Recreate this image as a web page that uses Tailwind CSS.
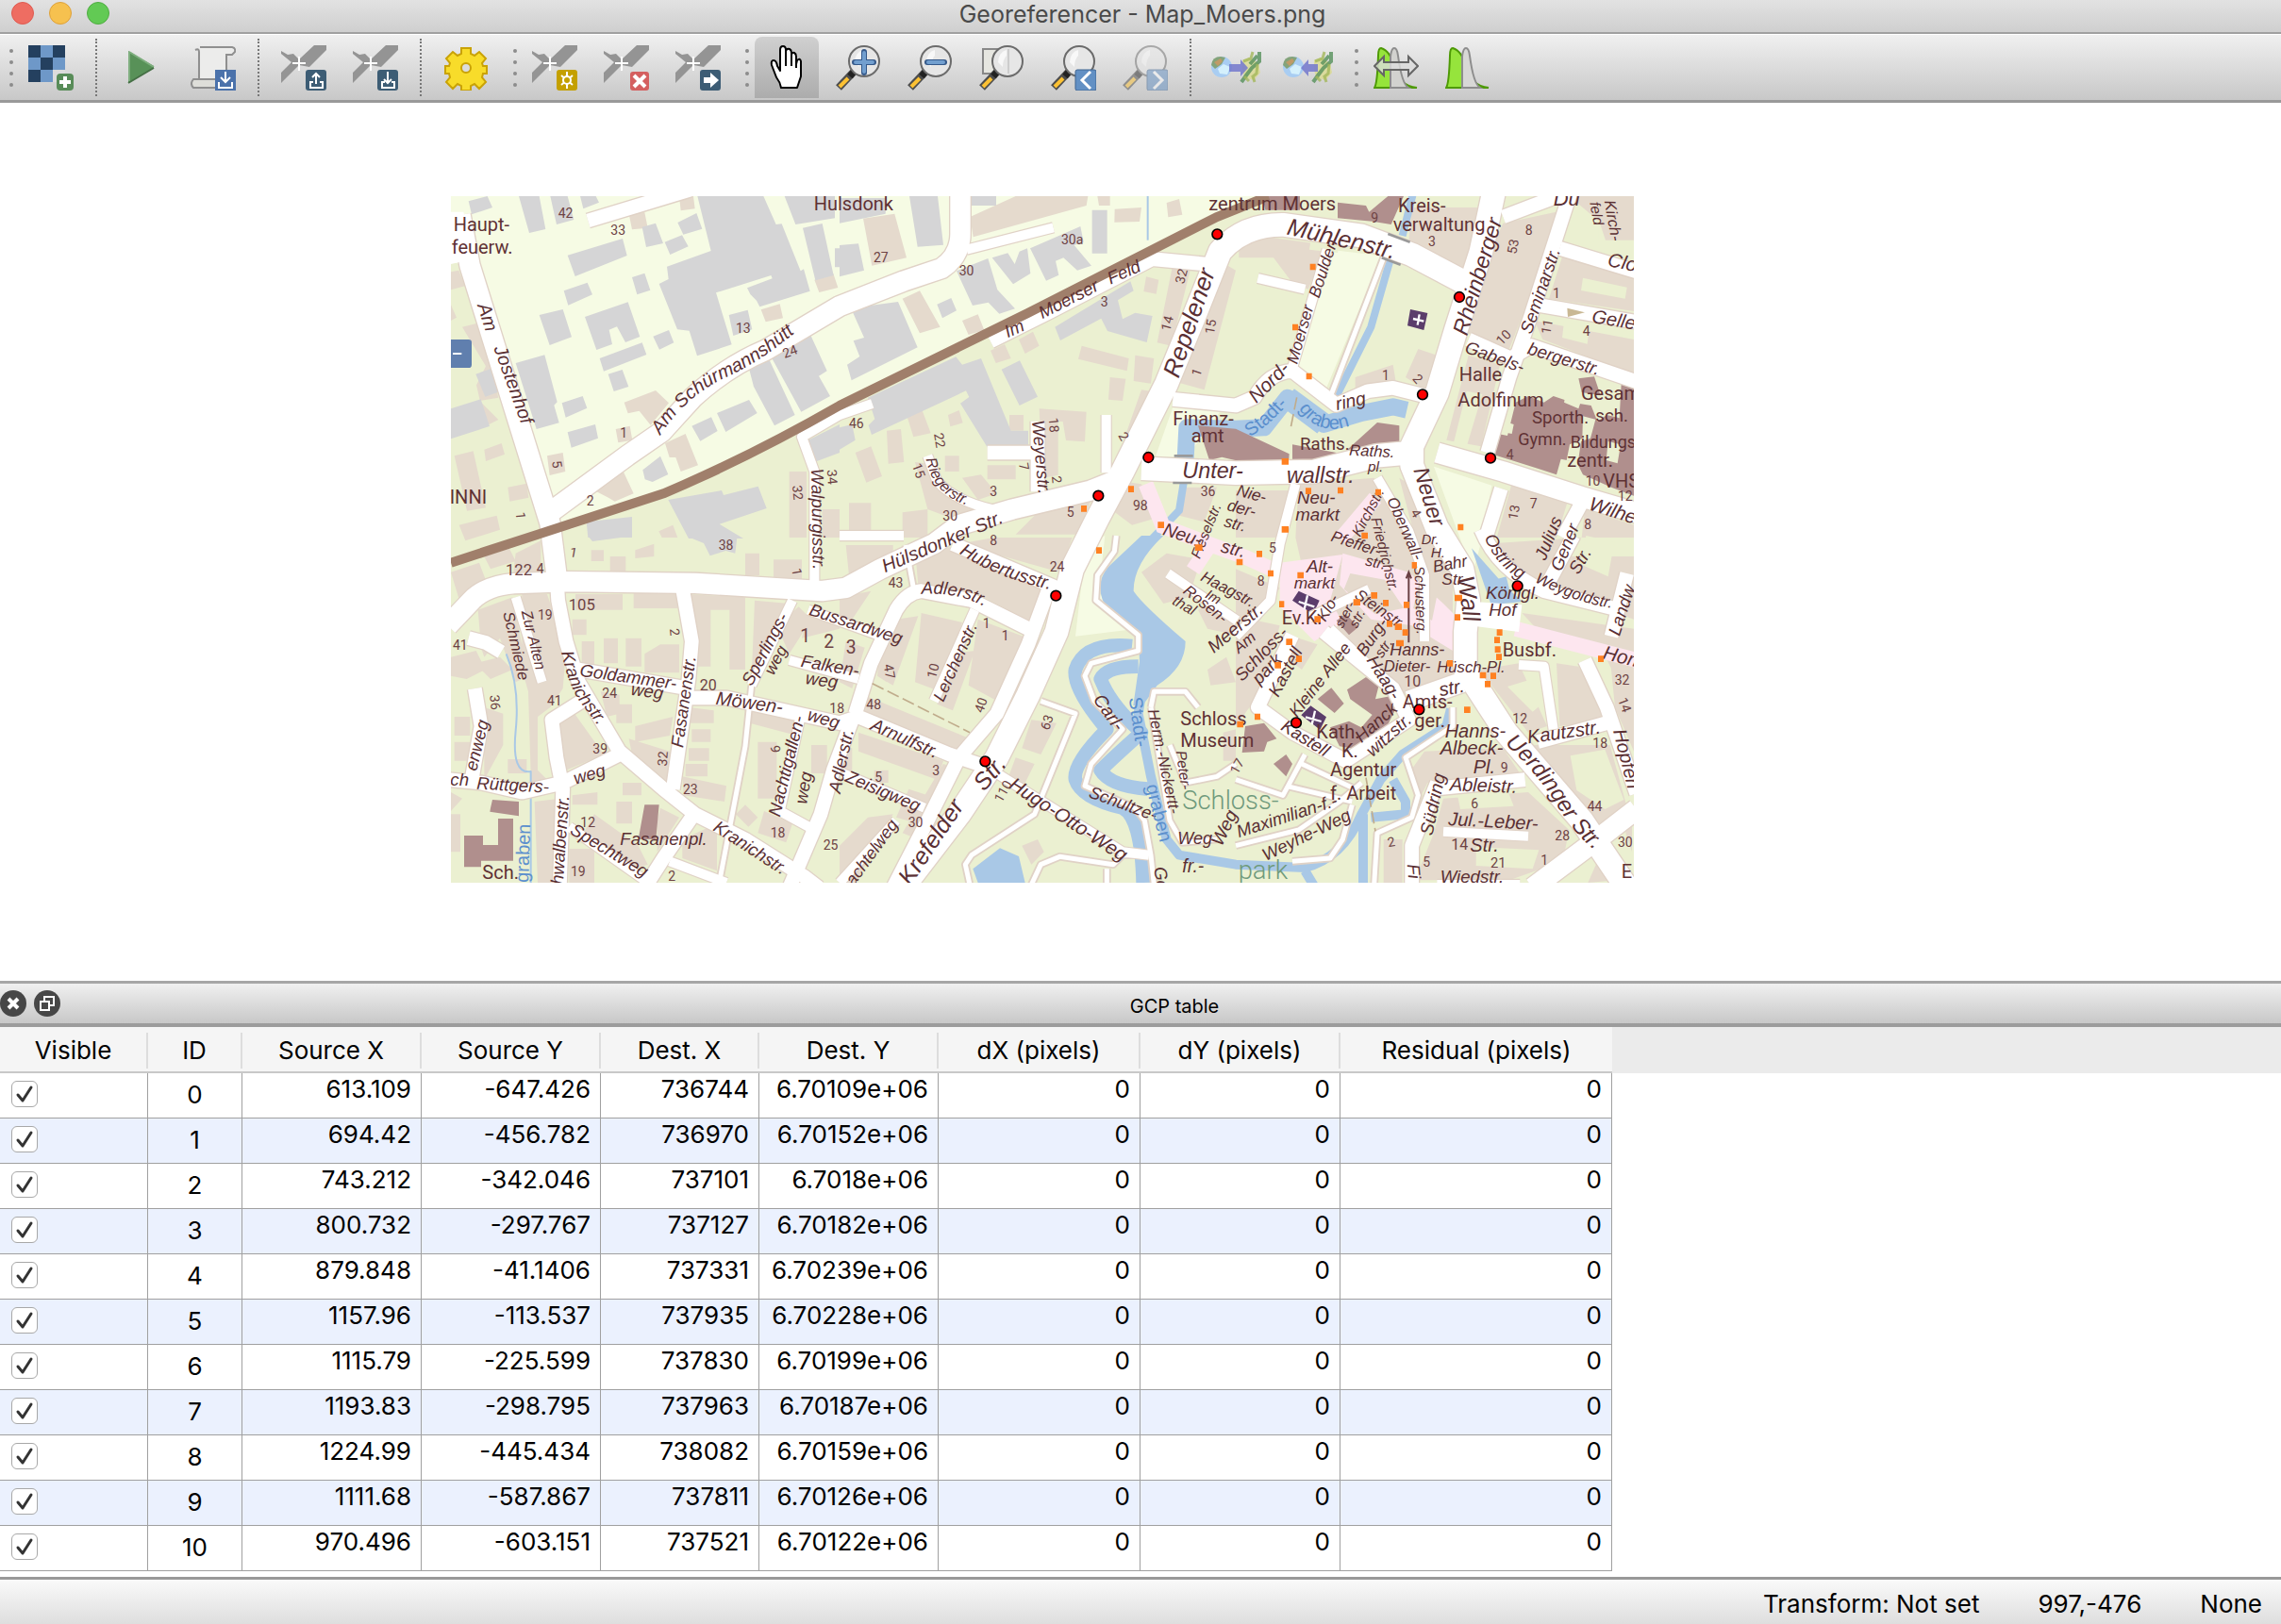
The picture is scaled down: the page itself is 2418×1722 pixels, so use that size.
<!DOCTYPE html>
<html lang="en">
<head>
<meta charset="utf-8">
<title>Georeferencer - Map_Moers.png</title>
<script src="https://cdn.jsdelivr.net/npm/@tailwindcss/browser@4"></script>
</head>
<body class="flex min-h-screen flex-col bg-white font-['Inter','Roboto',sans-serif] text-[26px] text-black">

<svg class="hidden" aria-hidden="true">
  <symbol id="gcp" viewBox="0 0 48 48">
    <path d="M35 0h13v5L30 23 19 21 0 40V29l11-11L0 9V6l7 4 6-1 6 6z" fill="#949494"/>
    <path d="M19 12v15M12 19h14" stroke="#fff" stroke-width="2"/>
  </symbol>
  <symbol id="lens" viewBox="0 0 48 48">
    <path d="M19 28 3 45" stroke="#4d4d4d" stroke-width="8"/>
    <path d="M13 35 4 44" stroke="#fcc133" stroke-width="4"/>
    <path d="M20 27l-5 6" stroke="#222" stroke-width="7"/>
    <circle cx="30" cy="17" r="16" fill="#e6e6e6" stroke="#6b6b6b" stroke-width="2"/>
    <path d="M20 18a11 13 0 0 1 9-13v6q-4 4-4 12z" fill="#fff" opacity=".7"/>
  </symbol>
  <symbol id="worlds" viewBox="0 0 54 36">
    <circle cx="12" cy="17" r="11" fill="#a9cdf2"/>
    <path d="M1 15q1-9 10-9l5 1-4 7-7 5z" fill="#84a37a"/>
    <path d="M4 12l7-4 2 3-5 5z" fill="#c09a67"/>
    <path d="M8 19l6-5 7 3-3 8-8-1z" fill="#d4f0fc"/>
    <path d="M34 10l7-3 10 6 2 10-7 8-10-3-2-8z" fill="#dcdc78" opacity=".6"/>
    <path d="M52 1v10l-8 7-6 8-5 7M50 5l-8 9" fill="none" stroke="#55905a" stroke-width="4" opacity=".8"/>
    <path d="M45 1l-2 7-8 3M50 14l-1 10-5 4M36 27l5 5M45 27l2 6" fill="none" stroke="#a3b65a" stroke-width="3" opacity=".8"/>
  </symbol>
</svg>

<header class="flex h-[36px] items-center border-b-2 border-[#a0a0a0] bg-linear-to-b from-[#e2e2e2] to-[#cfcfcf] pl-3">
  <div class="flex w-[112px] gap-4 pb-1.5">
    <button aria-label="Close window" class="size-6 rounded-full border border-[#df5a50] bg-[#ee6d62]"></button>
    <button aria-label="Minimise window" class="size-6 rounded-full border border-[#dea13a] bg-[#f6c14f]"></button>
    <button aria-label="Zoom window" class="size-6 rounded-full border border-[#4fac41] bg-[#62ca54]"></button>
  </div>
  <h1 class="flex-1 pb-1 pr-[120px] text-center text-[25px] leading-7 text-[#4a4a4a]">Georeferencer - Map_Moers.png</h1>
</header>

<nav aria-label="Georeferencer tools" class="flex h-[73px] items-stretch border-t border-b-3 border-t-white border-b-[#999] bg-linear-to-b from-[#f0f0f0] to-[#c8c8c8] pb-0.5 pt-0.5">
  <div class="flex w-5 flex-col items-end justify-center gap-2 pr-1.5"><i class="size-1 rounded-full bg-[#8c8c8c]"></i><i class="size-1 rounded-full bg-[#8c8c8c]"></i><i class="size-1 rounded-full bg-[#8c8c8c]"></i><i class="size-1 rounded-full bg-[#8c8c8c]"></i></div>
  <button aria-label="Open raster" class="grid w-[68px] place-items-center"><svg class="size-12" viewBox="0 0 48 48"><path d="M0 0h39v39H0z" fill="#24405f"/><path d="M13 0h13v13H13zM0 13h13v13H0zM26 13h13v13H26zM13 26h13v13H13z" fill="#6e98c8"/><path d="M26 26h13v13H26z" fill="#dcdcdc"/><rect x="30" y="30" width="18" height="18" rx="4" fill="#588c58"/><path d="M39 33v12M33 39h12" stroke="#fff" stroke-width="4"/></svg></button>
  <div class="flex w-7 justify-center py-0.5"><i class="border-l-2 border-dotted border-[#777]"></i></div>
  <button aria-label="Start georeferencing" class="grid w-[68px] place-items-center"><svg class="size-12" viewBox="0 0 48 48"><path d="M10 6l27 16v2L10 40z" fill="#589158"/><path d="M11 7v31M11 7l26 16" stroke="#7eae7e" stroke-width="2"/><path d="M10 40l27-16" stroke="#456f45" stroke-width="2"/></svg></button>
  <button aria-label="Generate GDAL script" class="ml-2 grid w-[68px] place-items-center"><svg class="size-12" viewBox="0 0 48 48"><path d="M10 2h34q4 1 3 5l-3 3h-6v30H9V7Q9 3 5 5" fill="#ececeb" stroke="#8f8f8f" stroke-width="2"/><path d="M8 36h24v9H3q-4-4 0-9z" fill="#deded9" stroke="#8f8f8f" stroke-width="2"/><rect x="26" y="26" width="22" height="22" fill="#4b72ab"/><path d="M37 28v10M32 34l5 5 5-5M30 39v6h14v-6" fill="none" stroke="#fff" stroke-width="2"/></svg></button>
  <div class="flex w-7 justify-center py-0.5"><i class="border-l-2 border-dotted border-[#777]"></i></div>
  <button aria-label="Load GCP points" class="grid w-[68px] place-items-center"><svg class="size-12" viewBox="0 0 48 48"><use href="#gcp"/><rect x="26" y="26" width="22" height="22" rx="3" fill="#3d5d75"/><path d="M37 41V30M33 34l4-4 4 4M34 39h-3v6h13v-6h-3" fill="none" stroke="#fff" stroke-width="2"/></svg></button>
  <button aria-label="Save GCP points as" class="ml-2 grid w-[68px] place-items-center"><svg class="size-12" viewBox="0 0 48 48"><use href="#gcp"/><rect x="26" y="26" width="22" height="22" rx="3" fill="#3d5d75"/><path d="M37 28v11M33 36l4 4 4-4M34 39h-3v6h13v-6h-3" fill="none" stroke="#fff" stroke-width="2"/></svg></button>
  <div class="flex w-7 justify-center py-0.5"><i class="border-l-2 border-dotted border-[#777]"></i></div>
  <button aria-label="Transformation settings" class="grid w-[68px] place-items-center"><svg class="size-12" viewBox="0 0 48 48"><path d="M19 3h10v6l4 2 5-4 7 7-4 5 1 3h4v8h-4l-1 4 4 5-7 7-5-5-4 2v5H19v-5l-4-2-5 5-7-7 4-5-1-4H2v-8h4l1-3-4-5 7-7 5 4 4-2z" fill="#f8dc2a" stroke="#c9a206" stroke-width="2"/><circle cx="24" cy="24" r="5" fill="#dcdcdc" stroke="#c9a206" stroke-width="2"/></svg></button>
  <div class="flex w-[26px] flex-col items-end justify-center gap-2 pr-1.5"><i class="size-1 rounded-full bg-[#8c8c8c]"></i><i class="size-1 rounded-full bg-[#8c8c8c]"></i><i class="size-1 rounded-full bg-[#8c8c8c]"></i><i class="size-1 rounded-full bg-[#8c8c8c]"></i></div>
  <button aria-label="Add point" class="grid w-[68px] place-items-center"><svg class="size-12" viewBox="0 0 48 48"><use href="#gcp"/><rect x="26" y="26" width="22" height="22" rx="3" fill="#c4a000"/><path d="M37 28v18M31 32l12 10M43 32L31 42" stroke="#fff" stroke-width="2"/><circle cx="37" cy="37" r="4" fill="#c4a000" stroke="#fff" stroke-width="2"/></svg></button>
  <button aria-label="Delete point" class="ml-2 grid w-[68px] place-items-center"><svg class="size-12" viewBox="0 0 48 48"><use href="#gcp"/><rect x="28" y="28" width="20" height="20" rx="3" fill="#d45f5f"/><path d="M32 32l12 12M44 32L32 44" stroke="#fff" stroke-width="4"/></svg></button>
  <button aria-label="Move GCP point" class="ml-2 grid w-[68px] place-items-center"><svg class="size-12" viewBox="0 0 48 48"><use href="#gcp"/><rect x="26" y="26" width="22" height="22" rx="3" fill="#3d5d75"/><path d="M30 34h7v-5l9 8-9 8v-5h-7z" fill="#fff"/></svg></button>
  <div class="flex w-[26px] flex-col items-end justify-center gap-2 pr-1.5"><i class="size-1 rounded-full bg-[#8c8c8c]"></i><i class="size-1 rounded-full bg-[#8c8c8c]"></i><i class="size-1 rounded-full bg-[#8c8c8c]"></i><i class="size-1 rounded-full bg-[#8c8c8c]"></i></div>
  <button aria-label="Pan" aria-pressed="true" class="grid w-[68px] place-items-center rounded-t-lg bg-linear-to-b from-[#d0d0d0] to-[#acacac]"><svg class="size-12" viewBox="0 0 48 48"><path d="M18 45q-1-6-5-11L8 21q-1-5 2-5 3 0 4 6l3 5V5q0-4 3-4t3 4v10V6q1-3 4-2 2 1 2 4v9-7q1-3 3-2t2 4v8l1-4q3-3 4 1v16l-4 12z" fill="#fff" stroke="#000" stroke-width="2" stroke-linejoin="round"/><path d="M23 12v10M29 14v8M34 18v6" stroke="#000" stroke-width="2"/></svg></button>
  <button aria-label="Zoom in" class="ml-2 grid w-[68px] place-items-center"><svg class="size-12" viewBox="0 0 48 48"><use href="#lens"/><path d="M30 7v22M20 18h20" stroke="#35598a" stroke-width="6" stroke-linecap="round"/><path d="M30 8v20M21 18h18" stroke="#729fcf" stroke-width="4" stroke-linecap="round"/></svg></button>
  <button aria-label="Zoom out" class="ml-2 grid w-[68px] place-items-center"><svg class="size-12" viewBox="0 0 48 48"><use href="#lens"/><path d="M21 18h18" stroke="#35598a" stroke-width="6" stroke-linecap="round"/><path d="M22 18h16" stroke="#729fcf" stroke-width="4" stroke-linecap="round"/></svg></button>
  <button aria-label="Zoom to layer" class="ml-2 grid w-[68px] place-items-center"><svg class="size-12" viewBox="0 0 48 48"><path d="M4 4h26v26H4z" fill="#e6e6e0" stroke="#888" stroke-width="2"/><use href="#lens"/><path d="M31 4v26" stroke="#ccc" stroke-width="2"/></svg></button>
  <button aria-label="Zoom last" class="ml-2 grid w-[68px] place-items-center"><svg class="size-12" viewBox="0 0 48 48"><use href="#lens"/><rect x="26" y="26" width="22" height="22" rx="2" fill="#6290c4" stroke="#3f6490"/><path d="M42 28l-9 9 9 9" fill="none" stroke="#fff" stroke-width="3"/></svg></button>
  <button aria-label="Zoom next" disabled class="ml-2 grid w-[68px] place-items-center opacity-50"><svg class="size-12" viewBox="0 0 48 48"><use href="#lens"/><rect x="26" y="26" width="22" height="22" rx="2" fill="#6290c4" stroke="#3f6490"/><path d="M33 28l9 9-9 9" fill="none" stroke="#fff" stroke-width="3"/></svg></button>
  <div class="flex w-7 justify-center py-0.5"><i class="border-l-2 border-dotted border-[#777]"></i></div>
  <button aria-label="Link Georeferencer to QGIS" class="grid w-[68px] place-items-center"><svg class="h-9 w-[54px]" viewBox="0 0 54 36"><use href="#worlds"/><path d="M20 14h12V9l8 9-8 9v-5H20z" fill="#7378cc" opacity=".85"/></svg></button>
  <button aria-label="Link QGIS to Georeferencer" class="ml-2 grid w-[68px] place-items-center"><svg class="h-9 w-[54px]" viewBox="0 0 54 36"><use href="#worlds"/><path d="M38 14H28V9l-8 9 8 9v-5h10z" fill="#7378cc" opacity=".85"/></svg></button>
  <div class="flex w-[26px] flex-col items-end justify-center gap-2 pr-1.5"><i class="size-1 rounded-full bg-[#8c8c8c]"></i><i class="size-1 rounded-full bg-[#8c8c8c]"></i><i class="size-1 rounded-full bg-[#8c8c8c]"></i><i class="size-1 rounded-full bg-[#8c8c8c]"></i></div>
  <button aria-label="Full histogram stretch" class="grid w-[68px] place-items-center"><svg class="size-12" viewBox="0 0 48 48"><path d="M1 45q3-4 4-34 0-8 3-8 10 3 14 20 5 20 24 22z" fill="#96e43c" stroke="#4e9a06" stroke-width="2"/><path d="M18 45V12q1-9 4-9t4 8q4 30 11 34z" fill="#d2d2cf" stroke="#8d8d8d" stroke-width="2"/><path d="M1 22l10-10v6h26v-6l10 10-10 10v-6H11v6z" fill="#dcdcdc" fill-opacity=".8" stroke="#666" stroke-width="2"/></svg></button>
  <button aria-label="Local histogram stretch" class="ml-2 grid w-[68px] place-items-center"><svg class="size-12" viewBox="0 0 48 48"><path d="M1 45q3-4 4-34 0-8 3-8 10 3 14 20 5 20 24 22z" fill="#96e43c" stroke="#4e9a06" stroke-width="2"/><path d="M18 45V12q1-9 4-9t4 8q4 30 11 34z" fill="#d8d8d6" stroke="#8d8d8d" stroke-width="2"/></svg></button>
</nav>

<main class="flex-1 pb-[104px] pl-[478px] pt-[99px]">
<svg class="block h-[728px] w-[1254px]" viewBox="0 0 3762 2184" role="img" aria-label="Street map of Moers with ground control points">
  <defs>
    <g id="r80"><path d="M3226 276L3056 186 2896 126 2646 91Q2520 90 2446 176L2366 376 2276 596 2136 876 2056 1026 1976 1186 1926 1386 1836 1586 1736 1786 1616 1966 1436 2200"/><path d="M2196 866L2496 881 2746 876 2946 826 3056 816"/><path d="M3316-10L3276 176 3196 426 3136 626 3056 796 3056 856 3136 1056 3216 1186 3236 1286 3226 1386V1506L3356 1706 3596 1986 3740 2200"/></g>
    <g id="r65"><path d="M30 60L60 220 315 1040 336 1206"/><path d="M310 1010L560 826 670 750 770 640Q880 540 1000 490L1236 350 1440 270 1560 230Q1620 190 1620 120V-10"/><path d="M-10 1366L66 1286Q110 1240 200 1232L376 1226 776 1231 1180 1256 1256 1246 1366 1186 1536 1106 1616 1046 1786 996 2036 936 2136 896"/><path d="M3136 816L3346 876 3596 956 3780 1010"/><path d="M3770 1950L3646 2046 3440 2200"/><path d="M3046 1606L3216 1546"/></g>
    <g id="r45"><path d="M336 1206L341 1286 366 1416 406 1546 536 1766 676 1886 776 1966 936 2046 1126 2166 1170 2200"/><path d="M436 78L760-20"/><path d="M1716 462L1900 370 2230 200 2400 216"/><path d="M3560-10L3436 376 3366 576 3296 816"/><path d="M3346 66L3546-10M3526 166L3770 240M3456 346L3770 400M3236 456L3370 516 3436 476 3770 590"/><path d="M2296 646L2496 666 2556 640Q2600 560 2676 556L2816 664 2916 620 2996 610 3116 640"/><path d="M736 1246L766 1416 756 1536 706 1886M406 1506L756 1566"/><path d="M756 1596H876L1236 1676 1296 1656 1586 1776 1736 1826"/><path d="M1286 1646L1336 1486 1416 1316Q1450 1260 1496 1256L1656 1286 1836 1376"/><path d="M1906 1236L1836 1426 1736 1646 1616 1786 1516 1986 1406 2200"/><path d="M1596 1106L1926 1246"/><path d="M1276 1666L1216 1826 1176 1966 1076 2200"/><path d="M-10 1856L96 1866 226 1896 356 1866 536 1776M76 1566L96 1686 66 1856M416 1606L321 1666 336 1786 356 1886 346 2200"/><path d="M56 1406L110 1420 160 1450"/><path d="M766 1976L676 2106 616 2200M1866 716V940M1706 816H1846"/><path d="M2676 1396L2566 1626 2676 1706 2846 1796 3046 1666 2996 1566 2776 1386"/><path d="M3456 1736L3676 1676M3606 1476L3676 1626 3770 1900M3116 1886L3416 1856M3136 1866L3056 2066V2200"/><path d="M3276 1060Q3330 1190 3476 1256L3716 1316M3570 1080L3476 1256M3340 930L3290 1090M3596 976L3536 1086M3740 1200L3690 1400"/></g>
    <g id="r30"><path d="M1640 170L1916 100M2676 546L2786 170M2566 261L2716 296M1666 1316L1536 1606M1086 1286L956 1556M1076 1476L1296 1536M1136 1316L1386 1406M1116 1636L1046 1956 1156 2016"/><path d="M206 1276L290 1546M376 2006L636 2190M696 2116L876 2184M1340 660L1236 696 1116 766 1156 876V1236M1516 826L1546 906Q1600 970 1736 1000M2084 696V880M1236 1080H1440"/><path d="M1246 1836L1506 1946M1236 2184L1416 1986M1736 1836L2136 2086 2220 2096M3396 1491L3476 1496 3506 1696M3156 2021L3426 2036M3136 2190H3400"/><path d="M2686 916L2636 1106 2606 1286 2496 1400M2946 896L3046 1066 3096 1206V1416M2730 1340L2920 1250M2796 1376L2996 1566M2280 1200L2500 1350"/></g>
    <g id="r16"><path d="M956 1556L936 1750 856 2170M1446 1110L1471 1246M2966 196L2796 640"/><path d="M1876 1606L1986 1646 1856 1966 1656 2096 1636 2126 1650 2190M1846 2190L1876 2126 1936 2101 2106 2126 2136 2096 2216 2096M2086 2140V2184"/><path d="M2116 1080L2110 1130 2056 1206 2051 1286 2186 1396V1446L2036 1486 2016 1526 2046 1606 2136 1696 2036 1806 2016 1876 2176 1946 2206 1986 2226 2096 2236 2190"/><path d="M2226 1626L2236 1576H2336L2376 1626M2226 1626L2286 1986 2326 2056 2436 2046M2286 1746L2336 1866 2436 1846 2496 1806"/><path d="M2496 1856L2646 1906 2716 1776M2656 1876L2866 1926M2706 1806L2876 1886M2496 2066L2696 2016 2826 1926 2896 1866M2676 2116L2796 2106 2836 2046 2866 1936M3186 1626V1686L3036 1786 3076 1906 3056 1976 2946 2026 2936 2190"/></g>
    <path id="p-schuermann" d="M690 785Q770 660 900 600T1150 430"/>
    <path id="p-kranich" d="M375 365Q400 480 440 530T520 640"/>
    <path id="p-stadt" d="M45 790Q110 750 170 680"/>
    <path id="p-graben" d="M200 700Q270 800 385 745"/>
    <path id="p-uerdinger" d="M855 655Q960 750 1020 850T1160 1010"/>
    <path id="p-hubertus" d="M380 50Q500 130 690 170"/>
    <path id="p-rieger" d="M275 860Q300 990 440 1015"/>
    <path id="p-adler" d="M260 180Q400 170 500 245"/>
    <path id="p-ost" d="M790 0Q830 90 900 130"/>
    <path id="p-weyg" d="M950 140Q1080 210 1230 230"/>
  </defs>

  <rect width="3762" height="2184" fill="#ebf0d1"/>
  <path d="M0 0H2560L2436 66 1836 371 1236 666 676 946 380 1060 320 1040 60 240 0 200z" fill="#f6fbe4"/>
  <path d="M2796 170L2960 190 2780 620 2690 540zM3126 860L3310 920 3276 1100 3250 1200zM2020 1110L2080 1080 2060 1260 2150 1380 1986 1400zM2300 660L2450 680 2340 830H2240z" fill="#f6fbe4"/>

  <!-- houses -->
  <g fill="#e5dacd">
    <g transform="translate(-24 -24)">
      <path d="M24 265l25-5 20 50-45 12zM60 440l60-15 55 240-60 10 60 60-40 20-30-130 30-60zM24 370l18 40-18 10zM575 680l100-38 42 40-58 70-36-45-36 8zM705 810l65-30 40 100-55 20-16-45h-20zM480 960l90-65 35 75-60 25-20-12zM1180 290l60-20 15 45-60 15zM1010 385l60-18 10 45-55 12zM590 80l50-5 10 50-50 5zM750 24h45l5 40-45 6zM35 850l60-15 40 180-60 10zM130 830l55-20 10 35-60 22zM205 950l60-12 6 45-60 12zM50 1070l120-30 10 45-110 35zM1100 900h55v210h-55zM1205 1020h55v90h-55zM685 1090l45-20 15 40h-50zM330 850l50-10 8 60-50 12zM548 765l45-10 8 45-45 8z"/>
    </g>
    <g transform="translate(1236 -24)">
      <path d="M75 95l100-15 38 140-110 25zM415 90L560 24h230l-5 30-360 100zM875 65l85-5-6 45-80 2zM820 24h40v30h-35zM1040 45l40-12 10 50-45 8zM200 350l55-25 65 115-65 20zM390 420l50-20 20 50-50 15zM480 515l45-20 20 45-48 15zM570 480l45-25 20 45-45 25zM770 500l150 40-6 40-155-38zM860 600l50 5-10 70-45-4zM940 530l60 10-10 80-55-8zM1060 240l55 20-60 240-45-10zM1210 230l50 30-100 380-90-25zM960 640l70 10-90 240-75 20zM635 700l150 10-5 95-60-4-10-60h-15v170l-50 10zM110 700l50-15 15 40-50 18zM150 770l45-5 10 105-50 5zM210 710l50-12 30 80-55 12zM345 720l35-15 12 40-40 12zM50 840l50-20 35 95-50 20zM30 1000h70v90H30zM335 850h45v50h-45zM240 870l40 5 70 110 90 20-40 60-120-45zM390 920l60-10 50 60-60 20zM470 880h90v45h-90zM200 1030l80-10v90h-80zM660 1000l150-40-50 140H560zM890 930l70 10 40 110-70 20-80-60zM1090 950h110l-40 110-80-20zM540 720h45v50h-45zM1040 0h60l-30 22zM975 280l40 10-8 45-40-8z"/>
    </g>
    <g transform="translate(2496 -24)">
      <path d="M10 180l100-25 180 25-60 140-50-20-60-80H10zM560 60h210l-30 210-190-100zM850 110l190-40-170 440-90-20-40-30 60-240zM1060 24h206v140h-90l-20-60zM1040 210l226 50v130l-270-40zM950 420l316 60v110l-290-110zM380 600l120-40 10 60-130 20zM580 510l60 20-40 110-60-40zM740 530l100 30-60 260-110-20zM0 960h170l-10 150H0zM200 940l240-20 130 190H190zM520 920l60 40 40 150h-50zM880 930l180 50-40 130H830zM1110 1020l156 50v40h-166z"/>
    </g>
    <g transform="translate(-24 1086)">
      <path d="M24 110l90-30 30 80-90 50zM130 60l80-25 20 40-80 25zM230 50l80-40v120H220zM110 230l110-40 50 250-40 20-50-140-50 60-10-30zM250 180h80l60 180-10 120-40 60-40 30v170l40 40-60 40-10-330-20-70zM420 180h150v50H420zM605 175h140v50H605zM770 180l190 10v230h-50v-190h-60v180h-50zM440 330h40v90h-40zM510 320h45v80h-45zM580 320h50v90h-50zM640 370l50-30h60v90h-110zM990 200l110 10-80 180-40 60zM1060 280l70-60 40 40-70 110zM350 590l60-40 100 140-120 50zM430 600l50 50-60 60zM500 490l60 10v60l-40 10zM550 530h50v60h-50zM610 600l120-30-10 60-110 20zM590 640l130 40v120l-120-110zM780 540l80 10v40h-80zM790 610h60v40h-60zM780 670h65v40h-65zM770 720h70v40h-70zM760 760l140 30-6 50-130-20zM1000 650h60v180h-60zM980 540l150 40-6 50-150-40zM930 880l30-30 40 40-30 30zM1020 870l90 40-20 60-90-30zM1170 660h50v90h-50zM130 540l60 20v100l-60 110zM35 570h50v60H35zM35 650h50v60H35zM205 705h60v45h-60zM60 830l-36 40v-60zM290 840l80-10v268h-70zM24 880h30v120H24zM410 820l80-10v40h-80zM480 880l140 100 30 60-60 20-150-110zM550 840h50v70h-50zM690 860l60 30-70 110v-100zM570 780h60v40h-60zM400 990h80v108h-80zM760 960l110-50v150l-110-40zM1160 230l100 20v40l-120 30zM24 380l80-20 30 60-60 30-50-10zM100 400l80-20 40 40-70 30zM410 260h45v50h-45zM960 50h45v70h-45zM1050 70h90v80h-90zM530 60h50v60h-50zM470 40h40v35h-40zM610 40l60-20v40l-60 6z"/>
    </g>
    <g transform="translate(1236 1086)">
      <path d="M240 40l120-10 300 130-50 110-170-90-190-30zM380 20l110-20h250l-40 110zM20 24h150v50L30 120zM180 260l70-10-80 220-50-30zM260 240l130 30-70 220-80-30zM440 260l160 60-80 210-110-60zM350 370l80-10-70 190-50-20zM75 500l340 140-30 40-310-110zM130 330l80 20-60 110-30-20zM60 620l270 90-20 60-250-90zM330 720l30 10-110 230-50-20zM110 740h45v40h-45zM220 800l60 20-30 90-70-20zM0 660l40 10v80H0zM610 580l80 10-50 100-60-20zM560 700l60 20-40 80-50-20zM580 980l50-20 20 40-40 40zM90 890l80-10-120 220H0V980zM960 110l80-60 110 20-40 120-80 20zM1140 230l60-30 60 60v50l-90-20zM1170 420l60-40 30 80-80 10zM1220 620l40-10v100h-40zM0 190l100-20-60 90H0zM20 330l60 20-40 130-40-20z"/>
    </g>
    <g transform="translate(2496 1086)">
      <path d="M0 100l140 60-60 100-80 80zM190 0h500v450l-130 60-110-70-140-170-70-50zM0 250l140 30-60 210-80 110zM200 320l60 20-50 80-40-30zM790 20l310-20-130 160-120-60zM1040 60h226v200L1020 170zM910 240l356 50v210l-60-60-40-80-200-60zM780 420l120-20 90 200-60 20-140-180zM1020 400l70 10 100 170-160 20zM1190 380h76v300l-60-140zM900 660h290l60 220-110 80-240-240zM600 680l250-10 60 90-300 20-30 60-30-90zM660 830l270-20 130 120-20 100-170 60H570l60-150zM470 960h60v138h-60zM1150 1030l60 60-90 8zM1260 880v120l-20-60z"/>
    </g>
  </g>
  <path d="M3650 100l-60 60 60-20zM3600 260l140 30-6 36-140-26zM3540 400l80 20-6 50-80-20zM3610 1080l90 20-20 110-90-40zM3230 620l50 10-60 200-40-10zM3360 1560l130-40 10 70-60 50zM3560 1780l110-20 60 160-60 30-90-60zM3420 1810l60-10 80 110-100-20zM2740 100l90 20-10 60-90-10zM2530 200l90 10-30 60-60-10zM3570 1280l100 30-10 30-130-40zM2830 1170l50-20 20 30-50 24zM2930 1970l100-30 10 40zM3200 1900l160-10 20 50-170 10zM3260 2070l200 10-20 60-180-10z" fill="#ebf0d1"/>

  <!-- industrial halls -->
  <g fill="#d5d5d6">
    <g transform="translate(-24 -24)">
      <path d="M80 40l60-16 16 36-66 22zM240 24h65l20 105-52 12zM340 24h55l20 75-55 15zM435 24h50l10 20-50 20zM395 212l175-53 14 54-165 66zM383 325l75-26 16 38-77 34zM305 402l75-18 28 88-70 26zM600 282l40-13 18 54-42 14zM632 122l43-12 24 64-54 12zM745 108l60-30 18 50-60 18zM704 170l55-22 20 36-58 26zM450 408l137-47 38 110-46 18-27-50-25 10 10 46-50 18zM497 540l135-50 14 38-136 53zM667 470l50-20 16 40-46 22zM524 590l45-14 20 54-47 15zM230 555l92-26 40 150-10 10 16 56-72 20zM377 682l66-22 14 38-68 30zM395 775l88-25 9 44-85 30zM103 590l50-18 36 70-56 20zM24 700l95-30 28 86-123 40zM634 895l56-44 25 58-50 24-24-8zM790 755l62-28 20 44-55 32zM870 714l102-42 26 42-100 60zM908 402l60-16 14 62-60 20zM808 24h210l40 90 18-2 60 150 10-6 20 70-160 50-10-20-20-20-10-20 80-30-4-10-175 55 50 165-110 36-25-80-38-4-58-145 30-15-5-40 140-50z"/>
      <path d="M1085 24h160v70l-125 20zM1143 125l62-14 36 165-58 16zM970 565l62-30 86 185-65 34-66-124zM1045 540l120-80 55 120-26 16 36 64-92 50zM1160 800l100-50v90l-80 30zM715 990l170-30 6 15 110-28 27 70-150 50 76 46H780zM455 1060l145-16v66H460zM1245 190h20v60h-20z"/>
    </g>
    <g transform="translate(1236 -24)">
      <path d="M0 30h150l-4 50L0 110zM222 24h90l18 155-82 6zM0 180l60-5 18 85-78 20zM412 24h86v30h-86zM803 68h48v138h-48zM606 190l160-70 10 50-30 10 55 65-45 15-44-40-25 10 10 45-40 18zM372 262l100-40 30 100 56 60-50 16-35-36-50 10zM485 220l50-15 22 35 15-40 25-10 10 80-55 34zM310 368l45-20 17 40-45 24zM36 380l150-20 62 145-210 105-14-50 40-26-20-50 34-10zM90 665l280-130 20 25 60-20 95 230h55v45l-130 8-86-140 28-20-10-20-300 140-10-30 20-20zM515 575l58-28 57 115-58 28zM685 440l240-145 10 30-50 30 15 60 40-20 55 10-18 84-125-36-20-40-130 70zM0 760l40-10 10 50-50 30z"/>
    </g>
    <path d="M760 1086h150l-6 50-30-8-50 16-20-40zM440 1086h100l-90 12z"/>
  </g>

  <!-- water -->
  <g fill="none" stroke="#a9c8e6" stroke-linejoin="round">
    <path d="M3060-10L3026 126M2986 206L2926 416 2816 636M2331 906L2316 1000 2230 1090" stroke-width="24"/>
    <path d="M2336 836L2341 736 2496 740 2586 736 2661 641 2776 726 2896 690 2996 670 3040 680" stroke-width="54"/>
    <path d="M2661 641L2776 726" stroke-width="70"/>
    <g transform="translate(1236 1086)">
      <path d="M930 345Q780 330 750 420 740 480 850 610 740 720 750 770 770 830 900 860 960 890 965 1098" stroke-width="44"/>
      <path d="M950 410Q850 410 830 450 860 530 960 620 870 700 830 740 860 790 980 800" stroke-width="44"/>
      <path d="M970 440L950 560 990 760 1040 960 1080 1010 1260 1040 1480 1050Q1600 1020 1660 880L1720 770 1790 690 1930 600 1944 545" stroke-width="30"/>
      <path d="M1665 880V1098M1690 890L1800 880 1800 840 1760 770M1480 1060L1510 1110" stroke-width="30"/>
    </g>
    <path d="M2216 0V140" stroke-width="6"/>
    <path d="M176 1456Q220 1560 206 1700T254 1830V2184" stroke-width="6"/>
  </g>
  <path d="M2196 1080H2266Q2170 1170 2171 1256 2200 1300 2336 1416 2336 1500 2246 1556L2200 1620H2170L2190 1480 2186 1380 2090 1320Q2040 1240 2090 1180zM1660 2140l86-66 60 26 20 84H1676zM3246 1120l106 120 56 50-100 10zM3286 1230l70-20 20 80-60 10z" fill="#a9c8e6"/>

  <!-- pedestrian zone -->
  <path d="M2636 1166l200-26-40 146 40 70-90 60-110-110zM2836 1136l210 60 110 100 60 60-30 90-130-80-130-20-100-110z" fill="#fde6ef"/>
  <path d="M2210 916L2264 1050 2420 1110 2530 1150 2640 1200M3386 1376L3770 1476M2830 1090L2940 960M2360 1190L2420 1100" fill="none" stroke="#fde6ef" stroke-width="48"/>
  <g fill="#e5dacd"><path d="M2860 1200l110 20 60 90-90 20-100-80zM3080 1230l60 20-20 100-60-40z"/></g>

  <!-- public buildings -->
  <g fill="#b08f8d">
    <path d="M2376 730l120 10 170 80-4 60-210-50-40 10zM2820 20l90 10 10 20 60-50h50l-40 90-60-10-110-10zM2580 0h120v44h-110zM2676 790l160 30 110-100 70 10v60l-100 60H2676z"/>
    <path d="M3330 756l30 6 26-106 40-20 50 20 30-20 60 20 60 10 20 50 30-20 40 10 6-110 48 10v350l-80-30-90-40-20-40-50-10-14 50-60-20-160-50z"/>
    <path d="M3586 580l50-6 20 60-60-10z"/>
    <path d="M126 1946l6-26 84 6v46l-92-14zM150 1980h48v134H96v20H42v-100h60v30h48zM616 1936h46l-10 110h-56zM2526 1686l60-10 40 50-30 10-10 30-70 4zM2616 1806l40-30 20 30-20 40zM2756 1600l44-36 40 50-30 30zM2850 1570l60-40 40 30-10 40 50-10 20 30-60 120-80-20 60-70-70-50zM2796 1690l60-20 60 30-30 60-60-10zM2816 1350l30-20 40 40-30 26z"/>
  </g>
  <path d="M3546 626l50 20-10 30-46-20zM3600 700l40 10-16 60-30 10-10 70-36-10 10-50 40-20zM3350 716l30 10-6 30-30-6zM3680 780l40 10-10 60-36-10z" fill="#ebf0d1"/>
  <path d="M2676 1286l20-30 66 30-20 44zM2704 1651l30-30 50 36-20 40zM3051 360l55 12-12 54-52-14z" fill="#5b3d6b"/>
  <path d="M2696 1290l50 16M2724 1270l-10 44M2718 1657l50 14M2748 1637l-10 44M3060 390l34 8M3080 376l-6 34" stroke="#fff" stroke-width="7"/>

  <!-- streets: casing, then surface -->
  <g fill="none" stroke="#e0d2c6" stroke-linejoin="round">
    <use href="#r80" stroke-width="82"/><use href="#r65" stroke-width="72"/><use href="#r45" stroke-width="52"/><use href="#r30" stroke-width="37"/><use href="#r16" stroke-width="26"/>
  </g>
  <g fill="none" stroke="#fff" stroke-linejoin="round">
    <use href="#r16" stroke-width="15"/><use href="#r30" stroke-width="30"/><use href="#r45" stroke-width="44"/><use href="#r65" stroke-width="64"/><use href="#r80" stroke-width="74"/>
  </g>
  <path d="M3250 1290L3406 1300 3396 1386 3240 1366zM0 50H40L70 200 0 216z" fill="#fff"/>
  <path d="M0 1166L276 1076 676 946Q950 830 1236 666L1836 371 2436 66 2600 0" fill="none" stroke="#a07f6b" stroke-width="30"/>
  <path d="M2300 826h60M2296 912h60M2980 120l70 26M2960 196l60 22" stroke="#999" stroke-width="8"/>
  <path d="M1340 1550L1650 1706M2690 640l-20 100M2910 1850l30 170" fill="none" stroke="#c0ac8c" stroke-width="5" stroke-dasharray="40 14"/>
  <path d="M3046 1420V1196M3038 1216l8-20 8 20" fill="none" stroke="#6b4045" stroke-width="6"/>
  <path d="M3550 356l56 14-54 14z" fill="#c9b894"/>
  <rect x="-10" y="456" width="76" height="90" rx="10" fill="#607fae"/>
  <path d="M6 501h28" stroke="#fff" stroke-width="6"/>

  <!-- labels -->
  <g font-family="'Roboto','Liberation Sans',sans-serif" font-size="60" fill="#5f3134">
    <text x="8" y="110">Haupt-</text><text x="2" y="184">feuerw.</text><text x="1154" y="44">Hulsdonk</text><text x="2410" y="44">zentrum Moers</text><text x="3012" y="52">Kreis-</text><text x="2996" y="112">verwaltung</text>
    <text x="3206" y="588">Halle</text><text x="3202" y="668">Adolfinum</text><text x="3594" y="648">Gesam</text><text font-size="56" x="3438" y="724">Sporth.</text><text font-size="56" x="3640" y="716">sch.</text><text font-size="54" x="3394" y="792">Gymn.</text><text font-size="54" x="3560" y="800">Bildungs</text><text x="3550" y="862">zentr.</text><text x="3664" y="926">VHS</text>
    <text x="2296" y="728">Finanz-</text><text x="2354" y="784">amt</text><text font-size="56" x="2700" y="808">Raths.</text><text x="-4" y="978">INNI</text><text x="100" y="2172">Sch.</text>
    <text x="2320" y="1684">Schloss</text><text x="2320" y="1752">Museum</text><text x="2642" y="1362">Ev.K.</text><text x="3344" y="1464">Busbf.</text><text x="3026" y="1630">Amts-</text><text x="3064" y="1690">ger.</text><text x="2752" y="1724">Kath.</text><text x="2832" y="1786">K.</text><text x="2796" y="1844">Agentur</text><text x="2796" y="1920">f. Arbeit</text><text x="3722" y="2170">E</text>
  </g>
  <g font-family="'Liberation Sans','Arial',sans-serif" font-style="italic" fill="#5a2f33">
    <g font-size="60" transform="translate(-24 -24)">
      <text><textPath href="#p-schuermann">Am Schürmannshütt</textPath></text>
      <text transform="translate(108 372) rotate(72)">Am</text><text transform="translate(160 508) rotate(70)">Jostenhof</text><text font-size="56" transform="translate(1170 890) rotate(89)">Walpurgisstr.</text>
    </g>
    <g font-size="56" transform="translate(1236 -24)">
      <text transform="translate(535 475) rotate(-24)">Im</text><text transform="translate(645 415) rotate(-27)">Moerser</text><text transform="translate(862 305) rotate(-24)">Feld</text>
      <text font-size="78" transform="translate(1078 605) rotate(-71)">Repelener</text><text font-size="70" x="1090" y="920">Unter-</text><text transform="translate(612 738) rotate(85)">Weyerstr.</text>
      <text font-size="48"><textPath href="#p-rieger">Riegerstr.</textPath></text>
      <text font-size="60" transform="translate(145 1222) rotate(-23)">Hülsdonker Str.</text>
    </g>
    <g font-size="56" transform="translate(2496 -24)">
      <text font-size="76" transform="translate(160 145) rotate(13)">Mühlenstr.</text><text font-size="70" transform="translate(735 470) rotate(-73)">Rheinberger</text><text transform="translate(940 465) rotate(-71)">Seminarstr.</text>
      <text font-size="52" transform="translate(265 350) rotate(-72)">Boulden</text><text font-size="52" transform="translate(195 560) rotate(-74)">Moerser</text><text font-size="62" transform="translate(65 685) rotate(-45)">Nord-</text><text font-size="58" transform="translate(322 705) rotate(-12)">ring</text>
      <text transform="translate(725 520) rotate(20)">Gabels-</text><text transform="translate(925 525) rotate(17)">bergerstr.</text><text font-size="62" transform="translate(1180 245) rotate(12)">Clo</text><text font-size="60" transform="translate(1130 425) rotate(10)">Gelle</text><text font-size="62" transform="translate(1120 1020) rotate(18)">Wilhe</text>
      <text font-size="70" x="162" y="937">wallstr.</text><text font-size="50" transform="translate(360 848) rotate(3)">Raths.</text><text font-size="46" x="420" y="900">pl.</text>
      <text font-size="70" transform="translate(565 895) rotate(73)">Neuer</text><text x="195" y="1002">Neu-</text><text x="190" y="1055">markt</text><text font-size="52" transform="translate(0 975) rotate(15)">Nie-</text><text font-size="52" transform="translate(-30 1022) rotate(15)">der-</text><text font-size="52" transform="translate(-40 1074) rotate(15)">str.</text>
      <text font-size="46" transform="translate(395 1110) rotate(-62)">Kirchstr.</text><text font-size="50" transform="translate(480 990) rotate(66)">Oberwall-</text><text font-size="46" transform="translate(430 1050) rotate(76)">Friedrichstr.</text>
      <text font-size="66" x="1010" y="54">Du</text><text font-size="50" transform="translate(1172 40) rotate(80)">Kirch-</text><text font-size="46" transform="translate(1126 45) rotate(80)">feld</text>
      <text font-size="46" transform="translate(-115 1180) rotate(-68)">Fieselstr.</text>
    </g>
    <g font-size="56" transform="translate(-24 1086)">
      <text><textPath href="#p-kranich">Kranichstr.</textPath></text>
      <text font-size="48" transform="translate(248 236) rotate(76)">Zur Alten</text><text font-size="50" transform="translate(190 240) rotate(77)">Schmiede</text>
      <text transform="translate(432 440) rotate(8)">Goldammer-</text><text transform="translate(595 500) rotate(8)">weg</text><text transform="translate(762 670) rotate(-82)">Fasanenstr.</text><text transform="translate(980 475) rotate(-62)">Sperlings-</text><text font-size="52" transform="translate(1050 440) rotate(-62)">weg</text>
      <text font-size="60" transform="translate(865 530) rotate(8)">Möwen-</text><text transform="translate(1155 580) rotate(16)">weg</text><text transform="translate(1070 890) rotate(-76)">Nachtigallen-</text><text transform="translate(1155 850) rotate(-80)">weg</text>
      <text transform="translate(105 800) rotate(3)">Rüttgers-</text><text transform="translate(420 785) rotate(-16)">weg</text><text transform="translate(105 745) rotate(-76)">enweg</text><text x="22" y="790">ch</text><text transform="translate(380 1105) rotate(-86)">hwalbenstr.</text><text transform="translate(400 940) rotate(31)">Spechtweg</text><text x="562" y="978">Fasanenpl.</text><text transform="translate(855 930) rotate(33)">Kranichstr.</text>
      <text transform="translate(1160 245) rotate(18)">Bussardweg</text><text transform="translate(1135 410) rotate(10)">Falken-</text><text transform="translate(1150 465) rotate(8)">weg</text><text transform="translate(1262 815) rotate(-78)">Adlerstr.</text>
    </g>
    <g font-size="58" transform="translate(1236 1086)">
      <text><textPath href="#p-hubertus">Hubertusstr.</textPath></text><text font-size="56"><textPath href="#p-adler">Adlerstr.</textPath></text>
      <text font-size="54" transform="translate(330 525) rotate(-66)">Lerchenstr.</text><text transform="translate(95 610) rotate(24)">Arnulfstr.</text><text font-size="56" transform="translate(15 775) rotate(23)">Zeisigweg</text><text font-size="54" transform="translate(45 1110) rotate(-54)">achtelweg</text>
      <text font-size="76" transform="translate(225 1110) rotate(-56)">Krefelder</text><text font-size="76" transform="translate(460 810) rotate(-50)">Str.</text><text font-size="62" transform="translate(535 796) rotate(33)">Hugo-Otto-Weg</text><text transform="translate(805 515) rotate(55)">Carl-</text><text font-size="54" transform="translate(790 825) rotate(20)">Schultze-</text>
      <text font-size="50" transform="translate(980 550) rotate(78)">Herm.-Nickertt-</text><text font-size="46" transform="translate(1070 680) rotate(82)">Peter-</text><text font-size="54" x="1075" y="975">Weg</text><text transform="translate(1215 985) rotate(-64)">Weg</text><text x="1090" y="1065">fr.-</text>
      <text font-size="50" transform="translate(1145 135) rotate(28)">Haagstr.</text><text font-size="50" transform="translate(1090 175) rotate(38)">Rosen-</text><text font-size="44" transform="translate(1160 190) rotate(30)">Im</text><text font-size="48" transform="translate(1055 210) rotate(30)">thal</text><text transform="translate(1190 370) rotate(-40)">Meerstr.</text><text transform="translate(1025 -10) rotate(18)">Neu-</text><text transform="translate(1210 45) rotate(14)">str.</text>
      <text font-size="56" transform="translate(1000 1050) rotate(82)">Ge</text>
    </g>
    <g font-size="56" transform="translate(2496 1086)">
      <text font-size="72"><textPath href="#p-uerdinger">Uerdinger Str.</textPath></text><text><textPath href="#p-ost">Ostring</textPath></text><text font-size="50"><textPath href="#p-weyg">Weygoldstr.</textPath></text>
      <text font-size="76" transform="translate(705 125) rotate(82)">Wall</text><text x="795" y="195">Königl.</text><text x="805" y="248">Hof</text><text font-size="62" transform="translate(1165 385) rotate(14)">Hom</text><text transform="translate(1220 315) rotate(-72)">Landw</text>
      <text transform="translate(985 75) rotate(-68)">Julius</text><text transform="translate(1035 110) rotate(-68)">Gener</text><text transform="translate(1090 120) rotate(-60)">Str.</text>
      <text x="225" y="110">Alt-</text><text font-size="52" x="185" y="162">markt</text><text font-size="50" transform="translate(300 10) rotate(18)">Pfeffer-</text><text font-size="48" transform="translate(410 88) rotate(12)">str.</text><text font-size="44" x="590" y="20">Dr.</text><text font-size="46" x="620" y="62">H.</text><text font-size="52" transform="translate(630 110) rotate(-10)">Bahr</text><text font-size="52" x="655" y="150">Str.</text>
      <text font-size="50" transform="translate(375 190) rotate(35)">Steinstr.</text><text font-size="50" transform="translate(285 270) rotate(-60)">Klo-</text><text font-size="44" transform="translate(340 290) rotate(-62)">ster-</text><text font-size="44" transform="translate(385 290) rotate(-62)">str.</text><text font-size="54" transform="translate(410 380) rotate(-55)">Burg-</text><text font-size="46" transform="translate(465 385) rotate(-55)">str.</text>
      <text font-size="46" transform="translate(568 90) rotate(88)">Schusterg.</text>
      <text font-size="54" x="490" y="375">Hanns-</text><text font-size="50" x="470" y="425">Dieter-</text><text font-size="50" x="640" y="430">Hüsch-Pl.</text><text transform="translate(415 390) rotate(58)">Haag-</text><text font-size="60" transform="translate(650 505) rotate(-10)">str.</text>
      <text font-size="54" transform="translate(195 575) rotate(-52)">Kleine Allee</text><text transform="translate(135 510) rotate(-62)">Kastell</text><text transform="translate(140 610) rotate(32)">Kastell</text><text transform="translate(400 655) rotate(-42)">Hanck</text><text transform="translate(435 700) rotate(-42)">witzstr.</text>
      <text transform="translate(20 460) rotate(-46)">Schloss-</text><text font-size="50" transform="translate(10 370) rotate(-40)">Am</text><text transform="translate(75 470) rotate(-46)">park</text>
      <text font-size="60" x="665" y="636">Hanns-</text><text font-size="60" x="650" y="690">Albeck-</text><text font-size="60" x="755" y="750">Pl.</text><text font-size="60" transform="translate(680 805) rotate(2)">Ableistr.</text><text font-size="60" transform="translate(675 915) rotate(3)">Jul.-Leber-</text><text font-size="60" x="745" y="998">Str.</text><text font-size="56" x="650" y="1098">Wiedstr.</text><text font-size="60" transform="translate(930 655) rotate(-8)">Kautzstr.</text><text font-size="60" transform="translate(1200 615) rotate(76)">Hopfen</text>
      <text font-size="58" transform="translate(625 950) rotate(-78)">Südring</text><text transform="translate(545 1040) rotate(85)">Fi</text><text transform="translate(10 955) rotate(-18)">Maximilian-f.-</text><text transform="translate(95 1030) rotate(-26)">Weyhe-Weg</text>
    </g>
  </g>
  <g font-family="'Roboto','Liberation Sans',sans-serif" font-size="42" fill="#6d4244">
    <g transform="translate(-24 -24)"><text x="365" y="92">42</text><text x="532" y="148">33</text><text x="930" y="460">13</text><text transform="translate(1085 540) rotate(-20)">24</text><text x="562" y="793">1</text><text x="455" y="1008">2</text><text transform="translate(345 868) rotate(80)">5</text><text transform="translate(230 1030) rotate(85)">1</text><text transform="translate(1110 945) rotate(85)">32</text><text transform="translate(1220 895) rotate(85)">34</text></g>
    <g transform="translate(1236 -24)"><text x="108" y="233">27</text><text x="380" y="276">30</text><text x="705" y="176">30a</text><text x="830" y="376">3</text><text transform="translate(1095 305) rotate(-75)">32</text><text transform="translate(1050 455) rotate(-75)">14</text><text transform="translate(1190 465) rotate(-80)">15</text><text transform="translate(1145 600) rotate(-70)">1</text><text x="30" y="763">46</text><text transform="translate(300 780) rotate(80)">22</text><text transform="translate(230 880) rotate(70)">15</text><text transform="translate(665 730) rotate(85)">18</text><text transform="translate(675 915) rotate(85)">2</text><text x="478" y="978">3</text><text x="328" y="1056">30</text><text x="722" y="1043">5</text><text x="933" y="1023">98</text><text x="1148" y="978">36</text><text transform="translate(885 785) rotate(60)">2</text><text transform="translate(570 875) rotate(80)">7</text></g>
    <g transform="translate(2496 -24)"><text x="430" y="108">9</text><text x="612" y="183">3</text><text transform="translate(892 210) rotate(-80)">53</text><text x="920" y="148">8</text><text transform="translate(845 500) rotate(-45)">10</text><text x="465" y="608">1</text><text transform="translate(560 605) rotate(50)">2</text><text x="1008" y="348">1</text><text transform="translate(1000 465) rotate(-80)">11</text><text x="1103" y="468">4</text><text x="860" y="860">4</text><text transform="translate(895 1055) rotate(-80)">13</text><text x="935" y="1016">7</text><text x="1108" y="1083">8</text><text transform="translate(555 1030) rotate(60)">4</text><text x="1112" y="945">10</text><text x="1215" y="992">12</text></g>
    <g transform="translate(-24 1086)"><text x="198" y="120" font-size="50">122</text><text x="398" y="230" font-size="50">105</text><text transform="translate(400 60) rotate(10)">1</text><text x="296" y="113">4</text><text x="300" y="260">19</text><text x="30" y="358">41</text><text x="330" y="533">41</text><text transform="translate(148 502) rotate(85)">36</text><text x="505" y="510">24</text><text x="815" y="485" font-size="48">20</text><text transform="translate(720 290) rotate(85)">2</text><text x="475" y="688">39</text><text transform="translate(710 728) rotate(-85)">32</text><text x="762" y="816">23</text><text x="1040" y="953">18</text><text x="436" y="920">12</text><text x="405" y="1078">19</text><text x="715" y="1093">2</text><text transform="translate(1040 662) rotate(85)">9</text><text x="1208" y="993">25</text><text x="1228" y="558">18</text><text x="875" y="38">38</text><text transform="translate(1108 100) rotate(80)">1</text><text x="1135" y="332" font-size="58">1</text><text x="1210" y="352" font-size="58">2</text></g>
    <g transform="translate(1236 1086)"><text x="20" y="370" font-size="58">3</text><text x="155" y="160">43</text><text x="478" y="23">8</text><text x="668" y="108">24</text><text x="455" y="288">1</text><text x="515" y="328">1</text><text transform="translate(140 405) rotate(80)">47</text><text transform="translate(305 450) rotate(-75)">10</text><text transform="translate(455 560) rotate(-70)">40</text><text x="85" y="546">48</text><text transform="translate(665 615) rotate(-70)">63</text><text x="112" y="776">5</text><text x="295" y="756">3</text><text x="218" y="920">30</text><text transform="translate(515 845) rotate(-60)">110</text></g>
    <g transform="translate(2496 1086)"><text x="105" y="48">5</text><text x="68" y="153">8</text><text x="535" y="475" font-size="48">10</text><text transform="translate(5 755) rotate(-60)">17</text><text x="880" y="590">12</text><text x="1135" y="668">18</text><text x="1205" y="468">32</text><text transform="translate(1215 515) rotate(70)">14</text><text x="842" y="748">9</text><text x="748" y="860">6</text><text x="685" y="992" font-size="48">14</text><text x="810" y="1050" font-size="44">21</text><text x="1015" y="963">28</text><text x="1118" y="870">44</text><text x="970" y="1040">1</text><text x="1215" y="983">30</text><text transform="translate(485 985) rotate(-10)">2</text><text x="595" y="1048">5</text></g>
  </g>
  <g font-family="'Liberation Sans','Arial',sans-serif" fill="#5b8fcd" font-size="60">
    <text transform="translate(2496 -24)"><textPath href="#p-stadt">Stadt-</textPath></text><text transform="translate(2496 -24)"><textPath href="#p-graben">graben</textPath></text>
    <text transform="translate(2156 1596) rotate(82)">Stadt-</text><text transform="translate(2210 1876) rotate(76)">graben</text><text transform="translate(246 2184) rotate(-88)">graben</text>
  </g>
  <g font-family="'Roboto','Liberation Sans',sans-serif" font-weight="300" fill="#6f9a7c" font-size="82"><text x="2326" y="1950">Schloss-</text><text x="2504" y="2172">park</text></g>

  <!-- bus stops -->
  <path fill="none" stroke="#ff8122" stroke-width="20" d="M2154 932h18M2004 994h18M2248 1046h20M2732 225h18M2676 417h18M2720 573h18M2642 844h22M2718 938h18M2820 936h18M2940 942h18M2642 1060h22M2896 1080h20M3202 1053h18M2052 1127h18M2366 1118h24M2562 1138h18M2498 1164h20M2598 1200h18M2692 1206h20M2634 1298h16M2746 1346h20M2926 1270h20M2870 1292h22M2964 1294h18M3030 1300h18M3056 1174h16M2976 1360h18M3002 1370h22M3026 1388h18M3006 1422h24M2656 1418h20M2688 1472h18M2620 1492h20M2556 1656h18M2500 1680h20M3192 1278h24M3192 1340h18M3168 1486h18M3326 1388h18M3318 1412h18M3320 1442h18M3324 1466h18M3272 1524h20M3306 1526h18M3288 1552h18M3222 1634h20M3648 1472h18"/>
  <!-- ground control points -->
  <g fill="#f00" stroke="#000" stroke-width="5"><circle cx="2437" cy="121" r="16"/><circle cx="2218" cy="831" r="16"/><circle cx="2059" cy="953" r="16"/><circle cx="3207" cy="321" r="16"/><circle cx="3090" cy="631" r="16"/><circle cx="3306" cy="833" r="16"/><circle cx="1924" cy="1271" r="16"/><circle cx="1699" cy="1798" r="16"/><circle cx="3392" cy="1240" r="16"/><circle cx="2688" cy="1675" r="16"/><circle cx="3079" cy="1633" r="16"/></g>
</svg>
</main>

<section aria-labelledby="gcp-title" class="bg-white">
  <div class="flex h-[49px] items-center border-b-4 border-t-3 border-b-[#9c9c9c] border-t-[#a6a6a6] bg-linear-to-b from-[#f0f0f0] to-[#c8c8c8]">
    <div class="flex w-[72px] gap-2">
      <button aria-label="Close panel" class="grid size-7 place-items-center rounded-full bg-[#474747]"><svg class="size-4" viewBox="0 0 16 16"><path d="M3 3l10 10M13 3L3 13" stroke="#fff" stroke-width="4"/></svg></button>
      <button aria-label="Float panel" class="grid size-7 place-items-center rounded-full bg-[#474747]"><svg class="size-4" viewBox="0 0 16 16" fill="none" stroke="#fff" stroke-width="2"><path d="M1 6h9v9H1zM5 5V1h10v9h-4"/></svg></button>
    </div>
    <h2 id="gcp-title" class="flex-1 pt-1.5 text-center text-[20px] leading-6">GCP table</h2>
  </div>
  <div class="flex items-start">
    <table class="w-[1709px] table-fixed border-separate border-spacing-0 text-right">
      <colgroup><col class="w-[157px]"><col class="w-[100px]"><col class="w-[190px]"><col class="w-[190px]"><col class="w-[168px]"><col class="w-[190px]"><col class="w-[214px]"><col class="w-[212px]"><col class="w-[288px]"></colgroup>
      <thead>
        <tr class="h-[49px] bg-[#f5f5f5] text-center leading-[38px] [&>th]:border-b-2 [&>th]:border-[#c8c8c8] [&>th]:p-0 [&>th]:pt-0.5 [&>th]:font-normal [&_span]:block [&_span]:border-r-2 [&_span]:border-[#ddd]">
          <th scope="col"><span>Visible</span></th><th scope="col"><span>ID</span></th><th scope="col"><span>Source X</span></th><th scope="col"><span>Source Y</span></th><th scope="col"><span>Dest. X</span></th><th scope="col"><span>Dest. Y</span></th><th scope="col"><span>dX (pixels)</span></th><th scope="col"><span>dY (pixels)</span></th><th scope="col">Residual (pixels)</th>
        </tr>
      </thead>
      <tbody id="rows" class="[&_tr:nth-child(even)]:bg-[#ebf1fe]"></tbody>
    </table>
    <div class="h-[49px] flex-1 bg-[#ebebeb]"></div>
  </div>
</section>

<footer class="mt-[6px] flex h-[50px] items-center justify-end gap-[62px] border-t-3 border-[#999] bg-linear-to-b from-[#fafafa] to-[#dedede] pr-5 pt-1">
  <span>Transform: Not set</span><span>997,-476</span><span>None</span>
</footer>

<script>
  const points = [
    ['613.109', '-647.426', '736744', '6.70109e+06'],
    ['694.42', '-456.782', '736970', '6.70152e+06'],
    ['743.212', '-342.046', '737101', '6.7018e+06'],
    ['800.732', '-297.767', '737127', '6.70182e+06'],
    ['879.848', '-41.1406', '737331', '6.70239e+06'],
    ['1157.96', '-113.537', '737935', '6.70228e+06'],
    ['1115.79', '-225.599', '737830', '6.70199e+06'],
    ['1193.83', '-298.795', '737963', '6.70187e+06'],
    ['1224.99', '-445.434', '738082', '6.70159e+06'],
    ['1111.68', '-587.867', '737811', '6.70126e+06'],
    ['970.496', '-603.151', '737521', '6.70122e+06']
  ];
  const cell = 'border-b border-r border-[#a0a0a0] p-0 align-top';
  document.getElementById('rows').innerHTML = points.map((p, i) => `
    <tr class="h-12">
      <td class="${cell}"><label class="relative ml-3 mt-2 block size-7">
        <input type="checkbox" checked aria-label="Point ${i} visible" class="block size-7 appearance-none rounded-md border border-[#a8a8a8] bg-white">
        <svg class="pointer-events-none absolute inset-0 size-7" viewBox="0 0 28 28" fill="none"><path d="M7 15l5 6 9-14" stroke="#333" stroke-width="3" stroke-linecap="round" stroke-linejoin="round"/></svg>
      </label></td>
      <td class="${cell} text-center leading-[46px]">${i}</td>
      ${[...p, '0', '0', '0'].map(v => `<td class="${cell} pr-2.5 leading-[34px]">${v}</td>`).join('')}
    </tr>`).join('');
</script>
</body>
</html>
